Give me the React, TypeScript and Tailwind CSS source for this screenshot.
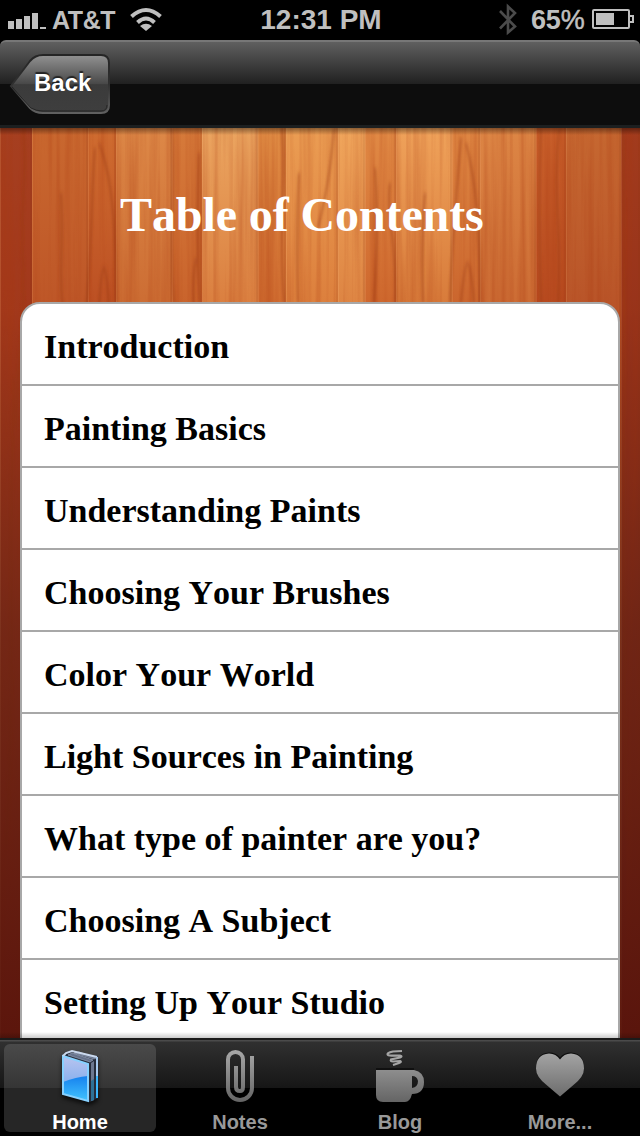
const chapters = [
  "Introduction",
  "Painting Basics",
  "Understanding Paints",
  "Choosing Your Brushes",
  "Color Your World",
  "Light Sources in Painting",
  "What type of painter are you?",
  "Choosing A Subject",
  "Setting Up Your Studio",
];

// x, width, top color, color further down
const planks: [number, number, string, string][] = [
  [0, 32, "#a63f20", "#a2381b"],
  [32, 56, "#c9682f", "#bd5527"],
  [88, 28, "#cf6c30", "#bb4e22"],
  [116, 56, "#dd8847", "#cb6b32"],
  [172, 30, "#d67a3a", "#c8622b"],
  [202, 56, "#eba560", "#d97c3d"],
  [258, 28, "#e08c44", "#cf6a2f"],
  [286, 52, "#eb9d53", "#db7d3b"],
  [338, 27, "#f0a65c", "#dc8241"],
  [365, 31, "#e18a45", "#cc642b"],
  [396, 56, "#efa25a", "#d67838"],
  [452, 28, "#df8743", "#c9632c"],
  [480, 56, "#dd8645", "#cb6a33"],
  [536, 30, "#c9602b", "#b74a20"],
  [566, 55, "#c66831", "#b85328"],
  [621, 19, "#a23b1d", "#98331a"],
];

// long thin streaks in the grain
const streaks = [
  "M23 0C28 45 20 80 23 130S18 220 16 300",
  "M61 65C64 120 58 150 63 180",
  "M95 20C91 65 93 110 86 180",
  "M99 15C111 45 116 90 116 175",
  "M99 178Q104 100 109 178",
  "M172 0C175 60 169 115 174 175",
  "M199 25Q196 110 200 175",
  "M194 180Q192 150 196 130",
  "M282 0C286 55 278 100 284 175",
  "M299 45Q296 100 298 175",
  "M334 0C330 50 324 75 318 100",
  "M375 40Q379 100 374 175",
  "M390 55C386 90 397 110 395 175",
  "M425 65Q421 110 423 175",
  "M461 10C457 60 452 110 450 175",
  "M466 15C476 55 480 95 480 175",
  "M461 175Q468 95 474 175",
  "M541 0Q538 80 541 175",
  "M558 175C562 110 553 65 559 0",
  "M623 0C627 200 620 420 627 700",
  "M14 250C8 420 17 500 6 720",
];

const WoodBackground = () => (
  <svg className="absolute inset-0 h-full w-full" viewBox="0 0 640 910" preserveAspectRatio="none">
    <defs>
      {planks.map(([x, , top, bottom]) => (
        <linearGradient key={x} id={`plank${x}`} gradientUnits="userSpaceOnUse" x1="0" y1="0" x2="0" y2="190">
          <stop offset="0" stopColor={top} />
          <stop offset="1" stopColor={bottom} />
        </linearGradient>
      ))}
      <linearGradient id="shade" x1="0" y1="0" x2="0" y2="1">
        <stop offset="0.2" stopColor="#4b140e" stopOpacity="0" />
        <stop offset="0.55" stopColor="#4b1811" stopOpacity="0.52" />
        <stop offset="1" stopColor="#4c0e09" stopOpacity="0.82" />
      </linearGradient>
      <linearGradient id="topShade" x1="0" y1="0" x2="0" y2="1">
        <stop offset="0" stopColor="#000" stopOpacity="0.4" />
        <stop offset="1" stopColor="#000" stopOpacity="0" />
      </linearGradient>
      <filter id="grain" x="0" y="0" width="100%" height="100%" colorInterpolationFilters="sRGB">
        <feTurbulence type="fractalNoise" baseFrequency="0.15 0.004" numOctaves="3" seed="8" />
        <feColorMatrix values="0 0 0 0 0.66  0 0 0 0 0.22  0 0 0 0 0.06  1.8 0 0 0 -0.7" />
      </filter>
      <filter id="soft">
        <feGaussianBlur stdDeviation="1.2 2" />
      </filter>
    </defs>
    {planks.map(([x, width]) => (
      <g key={x}>
        <rect x={x} width={width} height="910" fill={`url(#plank${x})`} />
        <rect x={x} width="1" height="910" fill="#ffc080" opacity="0.2" />
        <rect x={x + width - 2} width="2" height="910" fill="#8f3513" opacity="0.15" />
      </g>
    ))}
    <rect width="640" height="910" filter="url(#grain)" opacity="0.36" />
    <g fill="none" stroke="#9a3a16" strokeWidth="2.5" opacity="0.4" filter="url(#soft)">
      {streaks.map((d) => (
        <path key={d} d={d} />
      ))}
    </g>
    <rect width="640" height="910" fill="url(#shade)" />
    <rect width="640" height="7" fill="url(#topShade)" />
  </svg>
);

const StatusBar = () => (
  <div className="grid h-10 shrink-0 grid-cols-3 items-center bg-black text-[#bfbfbf]">
    <div className="flex h-10 items-center pl-2">
      <svg width="38" height="40" fill="#bfbfbf" shapeRendering="crispEdges">
        <path d="M0 21h6v8H0zM8 19h6v10H8zM16 16h6v13h-6zM24 13h6v16h-6zM32 27h6v2h-6z" />
      </svg>
      <span className="ml-[6px] w-[63px] text-[25px] leading-10 font-bold tracking-[-0.4px]">AT&amp;T</span>
      <svg className="ml-[15px]" width="32" height="40" fill="none" stroke="#bfbfbf" strokeWidth="4">
        <path d="M1.5 16.5Q16 3.5 30.5 16.5M7.5 22.5Q16 14.5 24.5 22.5" />
        <path d="M10 26Q16 21.5 22 26L16 31z" fill="#bfbfbf" stroke="none" />
      </svg>
    </div>
    <span className="pl-[2px] text-center text-[28px] leading-10 font-bold">12:31 PM</span>
    <div className="flex h-10 items-center justify-end pr-[6px]">
      <svg width="18" height="40" fill="none" stroke="#4b4b4b" strokeWidth="2.6">
        <path d="M1 11L16 26.5L9 32.5V6.5L16 13L1 28.5" />
      </svg>
      <span className="ml-[14px] w-[54px] text-[27px] leading-10 font-bold tracking-[-0.2px]">
        65<span className="font-normal [-webkit-text-stroke:0.5px_#bfbfbf]">%</span>
      </span>
      <svg className="ml-[7px]" width="42" height="40" fill="none" stroke="#bfbfbf" strokeWidth="2">
        <rect x="1" y="10" width="36" height="18" rx="1" />
        <path d="M38 16h3v6h-3" />
        <path d="M4 13h18v12H4z" fill="#bfbfbf" stroke="none" />
      </svg>
    </div>
  </div>
);

const NavBar = () => (
  <div className="h-[88px] shrink-0 bg-black">
    <div className="h-full rounded-t-md border-t-2 border-b-3 border-t-[#777] border-b-[#1c1f20] bg-[linear-gradient(#5f5f5f_0px,#202020_42px,#0d0d0d_42px,#0d0d0d_100%)] pt-[11px] pl-[9px]">
      <button className="relative block h-[62px] w-[102px]">
        <svg className="absolute inset-0" width="102" height="62">
          <defs>
            <linearGradient id="back" x1="0" y1="0" x2="0" y2="1">
              <stop offset="0" stopColor="#929292" />
              <stop offset="0.5" stopColor="#484848" />
              <stop offset="0.51" stopColor="#3b3b3b" />
              <stop offset="1" stopColor="#3e3e3e" />
            </linearGradient>
            <linearGradient id="backEdge" x1="0" y1="0" x2="0" y2="1">
              <stop offset="0" stopColor="#252525" />
              <stop offset="0.5" stopColor="#303030" />
              <stop offset="1" stopColor="#606060" />
            </linearGradient>
          </defs>
          <path
            d="M2 33L21 8Q26 2 34 2H92Q100 2 100 10V52Q100 60 92 60H34Q26 60 21 55Z"
            fill="url(#back)"
            stroke="url(#backEdge)"
            strokeWidth="2"
          />
          <path d="M3 34L22 55Q27 58 34 58H92Q98 58 98 52" fill="none" stroke="#252525" strokeWidth="1" />
        </svg>
        <span className="absolute top-[14px] left-[25px] text-2xl font-bold text-white [text-shadow:0_-2px_1px_#222]">
          Back
        </span>
      </button>
    </div>
  </div>
);

const BookIcon = () => (
  <svg width="48" height="56" className="shrink-0 drop-shadow-[0_3px_2px_rgba(0,0,0,0.7)]">
    <defs>
      <linearGradient id="cover" x1="0" y1="0" x2="0" y2="1">
        <stop offset="0" stopColor="#b9c4ef" />
        <stop offset="1" stopColor="#68a3ec" />
      </linearGradient>
      <linearGradient id="coverLow" x1="0" y1="0" x2="0" y2="1">
        <stop offset="0" stopColor="#1681ee" />
        <stop offset="1" stopColor="#42c4ff" />
      </linearGradient>
    </defs>
    <path d="M6 8L14 3L42 8V50L34 54L6 46z" fill="#252c3b" />
    <path d="M12 7L16 5L37 12L34 14zM18 5L23 4L40 10L38 11z" fill="#65718a" stroke="#9dabc5" strokeWidth="0.6" />
    <path d="M35 15L38 13V52L35 53z" fill="#6c7890" />
    <path d="M35 33L38 31V52L35 53z" fill="#2e7197" />
    <path d="M7 8L32 16V53L7 46z" fill="url(#cover)" />
    <path d="M7 34Q20 29 32 28V53L7 46z" fill="url(#coverLow)" />
    <path d="M7 8L32 16V53L7 46z" fill="none" stroke="#87d1ff" strokeWidth="2" />
    <path d="M7 8L10 5L16 3L41 9" fill="none" stroke="#cad8ed" strokeWidth="2" />
    <path d="M41 9V28" stroke="#a8caef" strokeWidth="2" />
    <path d="M41 28V50" stroke="#3db8ff" strokeWidth="2" />
  </svg>
);

const IconGradient = ({ id }: { id: string }) => (
  <defs>
    <linearGradient id={id} gradientUnits="userSpaceOnUse" x1="0" y1="0" x2="0" y2="56">
      <stop offset="0" stopColor="#aaa" />
      <stop offset="1" stopColor="#626262" />
    </linearGradient>
  </defs>
);

const ClipIcon = () => (
  <svg width="48" height="56" className="shrink-0">
    <IconGradient id="clip" />
    <path
      d="M36 8V40A12 12 0 0 1 12 40V11.5A7.5 7.5 0 0 1 27 11.5V39Q27 43 24 43Q20 43 20 39V18"
      fill="none"
      stroke="url(#clip)"
      strokeWidth="4"
    />
  </svg>
);

const CupIcon = () => (
  <svg width="50" height="56" className="shrink-0">
    <IconGradient id="cup" />
    <path
      d="M27 3L18 3.5Q11 5 13 7Q14 8 25 7.5Q28 8 25 9.5L16 11.5Q15 13.5 18 13.5L25 13Q27 14 24 15L18 17"
      fill="none"
      stroke="#a5a5a5"
      strokeWidth="2.2"
    />
    <path
      d="M1 22H39Q49 24 49 34Q49 46 37 46Q35 54 30 54H8Q1 54 1 47zM37 28V40Q43 39 43 33Q42 28 37 28z"
      fill="url(#cup)"
      fillRule="evenodd"
    />
    <path d="M1 21H39" stroke="#101010" strokeWidth="2" />
  </svg>
);

const HeartIcon = () => (
  <svg width="50" height="56" className="shrink-0">
    <IconGradient id="heart" />
    <g transform="translate(0 0.5)">
      <path d="M25 9Q29 4 36 4Q49 5 49 19Q49 27 39 35L25 47L11 35Q1 27 1 19Q1 5 14 4Q21 4 25 9z" fill="#0c0c0c" />
      <path d="M25 11Q29 5 36 5Q49 6 49 20Q49 28 39 36L25 48L11 36Q1 28 1 20Q1 6 14 5Q21 5 25 11z" fill="url(#heart)" />
    </g>
  </svg>
);

const tabs = [
  { label: "Home", icon: <BookIcon />, active: true },
  { label: "Notes", icon: <ClipIcon /> },
  { label: "Blog", icon: <CupIcon /> },
  { label: "More...", icon: <HeartIcon /> },
];

const TabBar = () => (
  <nav className="grid h-[98px] shrink-0 grid-cols-4 border-t-2 border-[#1b1b1b] bg-[linear-gradient(#4b4b4b_0px,#4b4b4b_1px,#303030_2px,#161616_48px,#000_48px)]">
    {tabs.map((tab) => (
      <div key={tab.label} className="px-1 pt-1 pb-1">
        <div
          className={`flex h-[88px] flex-col items-center rounded-md pt-1 text-xl font-bold ${
            tab.active
              ? "bg-[linear-gradient(#4a4a4a,#353535_44px,#262626_44px)] text-white"
              : "text-[#999]"
          }`}
        >
          {tab.icon}
          <span className="mt-1.5 leading-[24px]">{tab.label}</span>
        </div>
      </div>
    ))}
  </nav>
);

const App = () => {
  return (
    <div className="flex h-[1136px] w-[640px] flex-col overflow-hidden bg-black font-['Liberation_Sans',Arial,sans-serif]">
      <StatusBar />
      <NavBar />
      <main className="relative min-h-0 flex-1 overflow-hidden font-['Liberation_Serif','Times_New_Roman',serif] font-bold [font-kerning:none]">
        <WoodBackground />
        <div className="relative px-5">
          <h1 className="h-[174px] pt-[59px] pl-[100px] text-5xl leading-[56px] tracking-[-0.1px] text-white">
            Table of Contents
          </h1>
          <ul className="rounded-t-[20px] border-2 border-[#a8a8a8] bg-white">
            {chapters.map((chapter) => (
              <li
                key={chapter}
                className="h-[82px] border-b-2 border-[#a8a8a8] pt-[3px] pl-[22px] text-[34px] leading-[80px] text-black"
              >
                {chapter}
              </li>
            ))}
          </ul>
        </div>
        <div className="absolute inset-x-0 bottom-0 h-1.5 bg-linear-to-b from-transparent to-black/20" />
      </main>
      <TabBar />
    </div>
  );
};

export default App;
